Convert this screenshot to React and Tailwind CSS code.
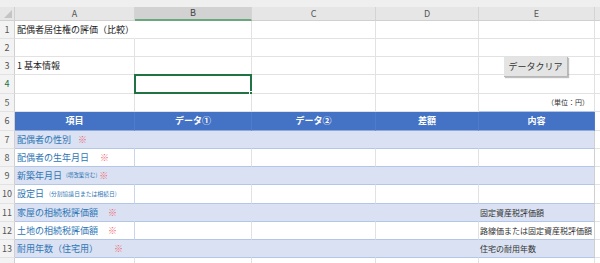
import React from "react";

const W = ["w-[120px]", "w-[117px]", "w-[124px]", "w-[103px]", "w-[116px]"];
const F = { fontFamily: '"Noto Sans CJK JP", "Noto Sans", sans-serif' };

function RowNum({ n, active }) {
  return (
    <div
      className={`w-[15px] shrink-0 flex items-center justify-center border-r border-b border-r-[#d0d0d0] border-b-[#e2e2e2] bg-[#f3f3f3] text-[9px] ${active ? "text-[#217346]" : "text-[#555]"}`}
    >
      {n}
    </div>
  );
}

function Row({ n, h, cells, active }) {
  return (
    <div className={`flex ${h} box-border`}>
      <RowNum n={n} active={active} />
      {cells.map((c, i) => (
        <div
          key={i}
          className={`${W[i]} shrink-0 box-border border-b border-r flex items-center overflow-visible whitespace-nowrap relative ${c && c.cls ? c.cls : "border-r-[#e2e2e2] border-b-[#e2e2e2] bg-white"}`}
        >
          {c && c.content}
        </div>
      ))}
      <div className="flex-1 box-border border-b border-b-[#e2e2e2] bg-white" />
    </div>
  );
}

const blank = null;
const bandCell = { cls: "bg-[#d9e1f2] border-r-[#d9e1f2] border-b-[#b4c6e7]" };
const bandLast = { cls: "bg-[#d9e1f2] border-r-[#d0d0d0] border-b-[#b4c6e7]" };
const whiteT = { cls: "bg-white border-r-[#e2e2e2] border-b-[#b4c6e7]" };
const whiteLast = { cls: "bg-white border-r-[#d0d0d0] border-b-[#b4c6e7]" };

const Mark = ({ ml }) => <span className={`text-[#f26670] text-[9px] ${ml}`}>※</span>;

function ItemA({ children, band }) {
  return {
    cls: band
      ? "bg-[#d9e1f2] border-r-[#d9e1f2] border-b-[#b4c6e7] pl-[2px] text-[#2e75b6] text-[9px]"
      : "bg-white border-r-[#c9d5ea] border-b-[#b4c6e7] pl-[2px] text-[#2e75b6] text-[9px]",
    content: <span className="flex items-center">{children}</span>,
  };
}

function Content(text, band) {
  return {
    cls: `${band ? "bg-[#d9e1f2] border-b-[#b4c6e7]" : "bg-white border-b-[#b4c6e7]"} border-r-[#d0d0d0] pl-[1px] text-[8px] text-[#333]`,
    content: text,
  };
}

export default function App() {
  return (
    <div className="relative w-[600px] h-[263px] overflow-hidden bg-white select-none" style={F}>
      <div className="h-[7px] bg-[#efefef]" />
      <div className="flex h-[14px] bg-[#e6e6e6] text-[9px] text-[#555]">
        <div className="w-[15px] shrink-0 relative border-r border-b border-[#d0d0d0]">
          <div className="absolute right-[2px] bottom-[2px] w-0 h-0 border-l-[8px] border-l-transparent border-b-[8px] border-b-[#c4c4c4]" />
        </div>
        {["A", "B", "C", "D", "E"].map((l, i) => (
          <div
            key={l}
            className={`${W[i]} shrink-0 flex items-center justify-center border-r border-[#d4d4d4] ${l === "B" ? "bg-[#d2d2d2] border-b-2 border-b-[#6aa77f] text-[#444]" : "border-b border-b-[#d0d0d0]"}`}
          >
            {l}
          </div>
        ))}
        <div className="flex-1 border-b border-[#d0d0d0]" />
      </div>

      <Row n="1" h="h-[18px]" cells={[{ cls: "bg-white border-r-transparent border-b-[#e2e2e2] pl-[2px] text-[9px] text-[#222]", content: "配偶者居住権の評価（比較）" }, blank, blank, blank, blank]} />
      <Row n="2" h="h-[18px]" cells={[blank, blank, blank, blank, blank]} />
      <Row n="3" h="h-[18px]" cells={[{ cls: "bg-white border-r-[#e2e2e2] border-b-[#e2e2e2] pl-[2px] text-[9px] text-[#222]", content: "1 基本情報" }, blank, blank, blank, blank]} />
      <Row
        n="4"
        h="h-[19px]"
        active
        cells={[
          blank,
          {
            cls: "bg-white border-r-[#e2e2e2] border-b-[#e2e2e2]",
            content: (
              <div className="absolute left-[-1px] top-[-1px] right-[-1px] bottom-[-1px] border-2 border-[#217346]">
                <div className="absolute right-[-4px] bottom-[-4px] w-[5px] h-[5px] bg-[#217346] border border-white" />
              </div>
            ),
          },
          blank,
          blank,
          blank,
        ]}
      />
      <Row
        n="5"
        h="h-[18px]"
        cells={[
          blank,
          blank,
          blank,
          blank,
          { cls: "bg-white border-r-[#e2e2e2] border-b-[#b4c6e7] justify-end pr-[5px] text-[7px] text-[#333]", content: "（単位：円）" },
        ]}
      />
      <Row
        n="6"
        h="h-[19px]"
        cells={["項目", "データ①", "データ②", "差額", "内容"].map((t) => ({
          cls: "bg-[#4472c4] border-r-[#4f7bc8] border-b-[#8eaadb] justify-center text-white font-bold text-[9px]",
          content: t,
        }))}
      />
      <Row
        n="7"
        h="h-[18px]"
        cells={[
          ItemA({ band: true, children: (<>配偶者の性別<Mark ml="ml-[7px]" /></>) }),
          bandCell,
          bandCell,
          bandCell,
          bandLast,
        ]}
      />
      <Row
        n="8"
        h="h-[18px]"
        cells={[
          ItemA({ band: false, children: (<>配偶者の生年月日<Mark ml="ml-[11px]" /></>) }),
          whiteT,
          whiteT,
          whiteT,
          whiteLast,
        ]}
      />
      <Row
        n="9"
        h="h-[18px]"
        cells={[
          ItemA({
            band: true,
            children: (
              <>
                新築年月日<span className="text-[5.5px] ml-[4px]">(増改築含む)</span>
                <Mark ml="ml-[2px]" />
              </>
            ),
          }),
          bandCell,
          bandCell,
          bandCell,
          bandLast,
        ]}
      />
      <Row
        n="10"
        h="h-[19px]"
        cells={[
          ItemA({
            band: false,
            children: (
              <>
                設定日<span className="text-[5.8px] ml-[5px]">(分割協議日または相続日)</span>
              </>
            ),
          }),
          whiteT,
          whiteT,
          whiteT,
          whiteLast,
        ]}
      />
      <Row
        n="11"
        h="h-[18px]"
        cells={[
          ItemA({ band: true, children: (<>家屋の相続税評価額<Mark ml="ml-[10px]" /></>) }),
          bandCell,
          bandCell,
          bandCell,
          Content("固定資産税評価額", true),
        ]}
      />
      <Row
        n="12"
        h="h-[18px]"
        cells={[
          ItemA({ band: false, children: (<>土地の相続税評価額<Mark ml="ml-[10px]" /></>) }),
          whiteT,
          whiteT,
          whiteT,
          Content("路線価または固定資産税評価額", false),
        ]}
      />
      <Row
        n="13"
        h="h-[18px]"
        cells={[
          ItemA({ band: true, children: (<>耐用年数（住宅用）<Mark ml="ml-[16px]" /></>) }),
          bandCell,
          bandCell,
          bandCell,
          Content("住宅の耐用年数", true),
        ]}
      />
      <Row n="" h="h-[18px]" cells={[blank, blank, blank, blank, blank]} />

      <div className="absolute left-[504px] top-[57px] w-[64px] h-[20px] flex items-center justify-center bg-[#e4e4e4] border-r border-b border-[#b8b8b8] shadow-[1px_1px_1px_rgba(0,0,0,0.25)] text-[9px] text-[#333]">
        データクリア
      </div>
    </div>
  );
}
